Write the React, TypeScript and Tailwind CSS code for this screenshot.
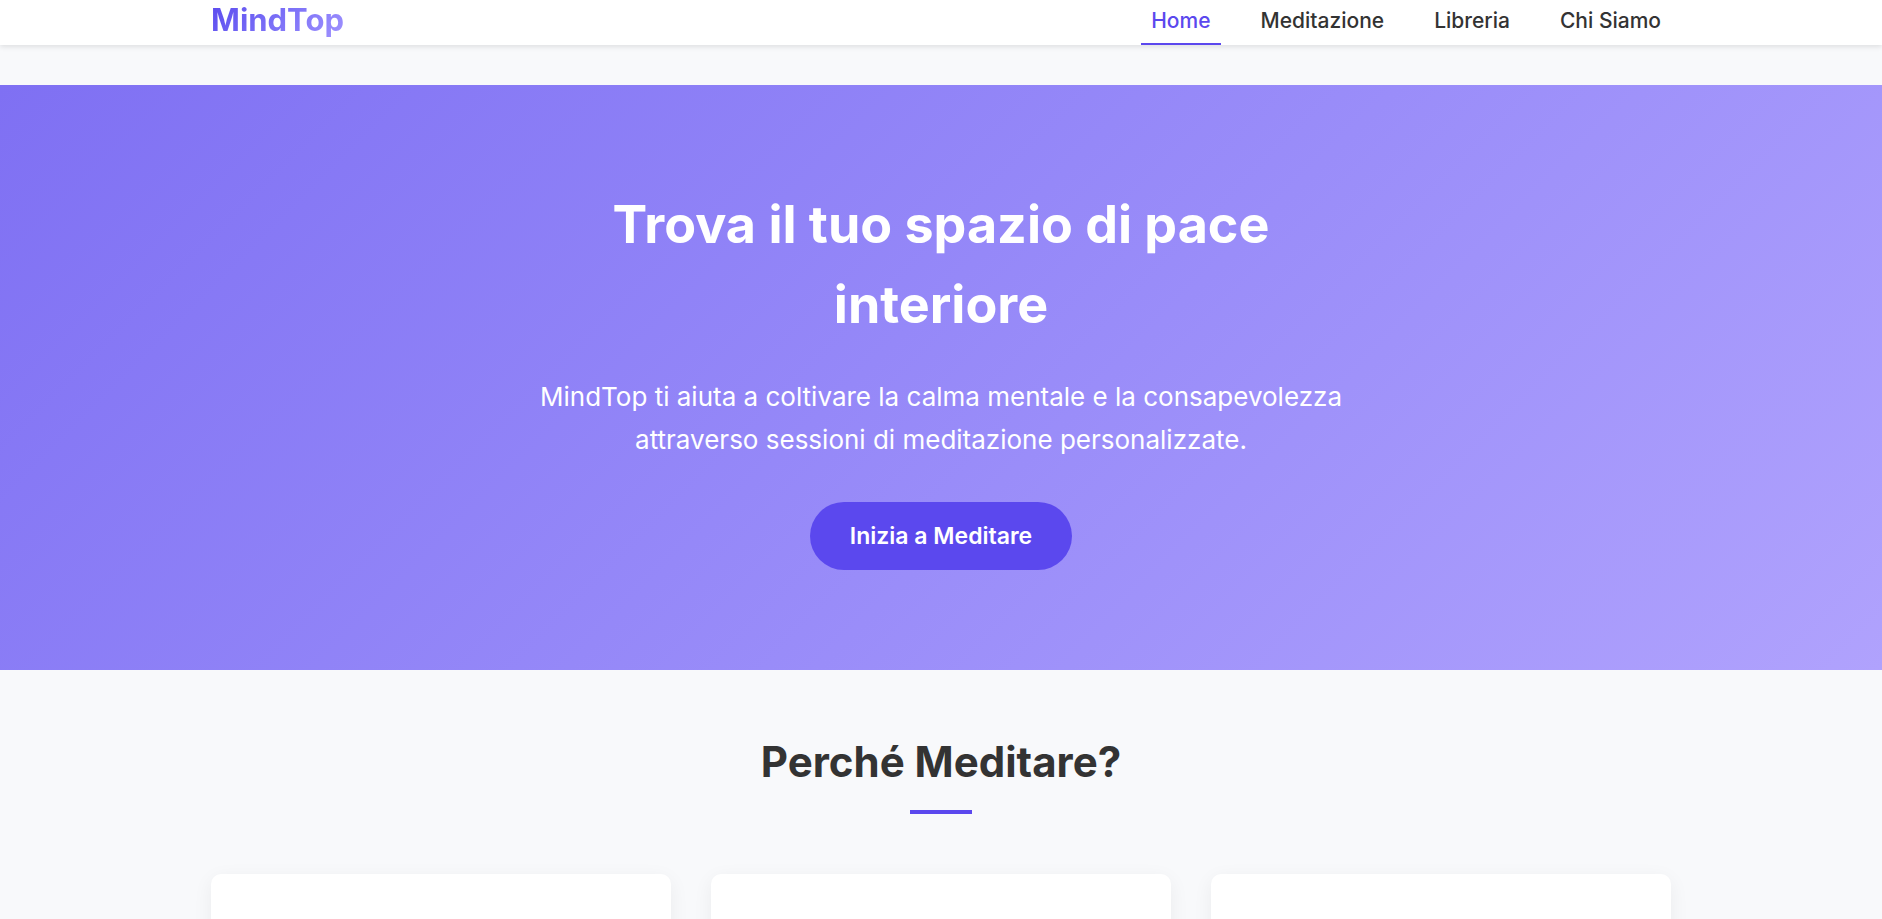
const navItems = [
  { label: "Home", active: true },
  { label: "Meditazione", active: false },
  { label: "Libreria", active: false },
  { label: "Chi Siamo", active: false },
];

function Header() {
  return (
    <header className="relative z-10 bg-white shadow-[0_2px_5px_rgba(0,0,0,0.1)]">
      <div className="mx-auto flex max-w-[1500px] items-stretch justify-between px-5">
        <a
          href="#"
          className="bg-linear-135 from-[#5b48ee] to-[#a394ff] bg-clip-text text-[31px] leading-[40px] font-bold text-transparent"
        >
          MindTop
        </a>
        <nav aria-label="Principale">
          <ul className="flex gap-[30px]">
            {navItems.map((item) => (
              <li key={item.label}>
                <a
                  href="#"
                  aria-current={item.active ? "page" : undefined}
                  className={
                    item.active
                      ? "block border-b-2 border-[#5b48ee] px-2.5 pb-[1px] text-[21px] leading-[42px] font-medium text-[#5b48ee]"
                      : "block border-b-2 border-transparent px-2.5 pb-[1px] text-[21px] leading-[42px] font-medium text-[#333333]"
                  }
                >
                  {item.label}
                </a>
              </li>
            ))}
          </ul>
        </nav>
      </div>
    </header>
  );
}

function Hero() {
  return (
    <section className="mt-10 bg-linear-135 from-[#7f70f3] to-[#b0a2fd] px-5 py-[100px] text-center text-white">
      <div className="mx-auto max-w-[820px]">
        <h1 className="text-[52px] leading-[80px] font-bold">Trova il tuo spazio di pace interiore</h1>
        <p className="mt-[30px] text-[26px] leading-[43px]">
          MindTop ti aiuta a coltivare la calma mentale e la consapevolezza attraverso sessioni di meditazione
          personalizzate.
        </p>
        <button
          type="button"
          className="mx-auto mt-[41px] block rounded-full bg-[#5b48ee] px-10 py-[18px] text-[23px] leading-8 font-semibold"
        >
          Inizia a Meditare
        </button>
      </div>
    </section>
  );
}

function Benefits() {
  return (
    <section className="mx-auto max-w-[1500px] px-5 pt-[60px]">
      <h2 className="text-center text-[42px] leading-[64px] font-bold text-[#333333]">Perché Meditare?</h2>
      <div className="mx-auto mt-4 h-1 w-[62px] bg-[#5b48ee]" />
      <div className="mt-[60px] grid grid-cols-3 gap-10">
        <div className="h-80 rounded-[10px] bg-white shadow-[0_5px_20px_rgba(0,0,0,0.06)]" />
        <div className="h-80 rounded-[10px] bg-white shadow-[0_5px_20px_rgba(0,0,0,0.06)]" />
        <div className="h-80 rounded-[10px] bg-white shadow-[0_5px_20px_rgba(0,0,0,0.06)]" />
      </div>
    </section>
  );
}

export default function App() {
  return (
    <div className="h-screen overflow-hidden bg-[#f8f9fb] font-['Inter',sans-serif]">
      <Header />
      <main>
        <Hero />
        <Benefits />
      </main>
    </div>
  );
}
